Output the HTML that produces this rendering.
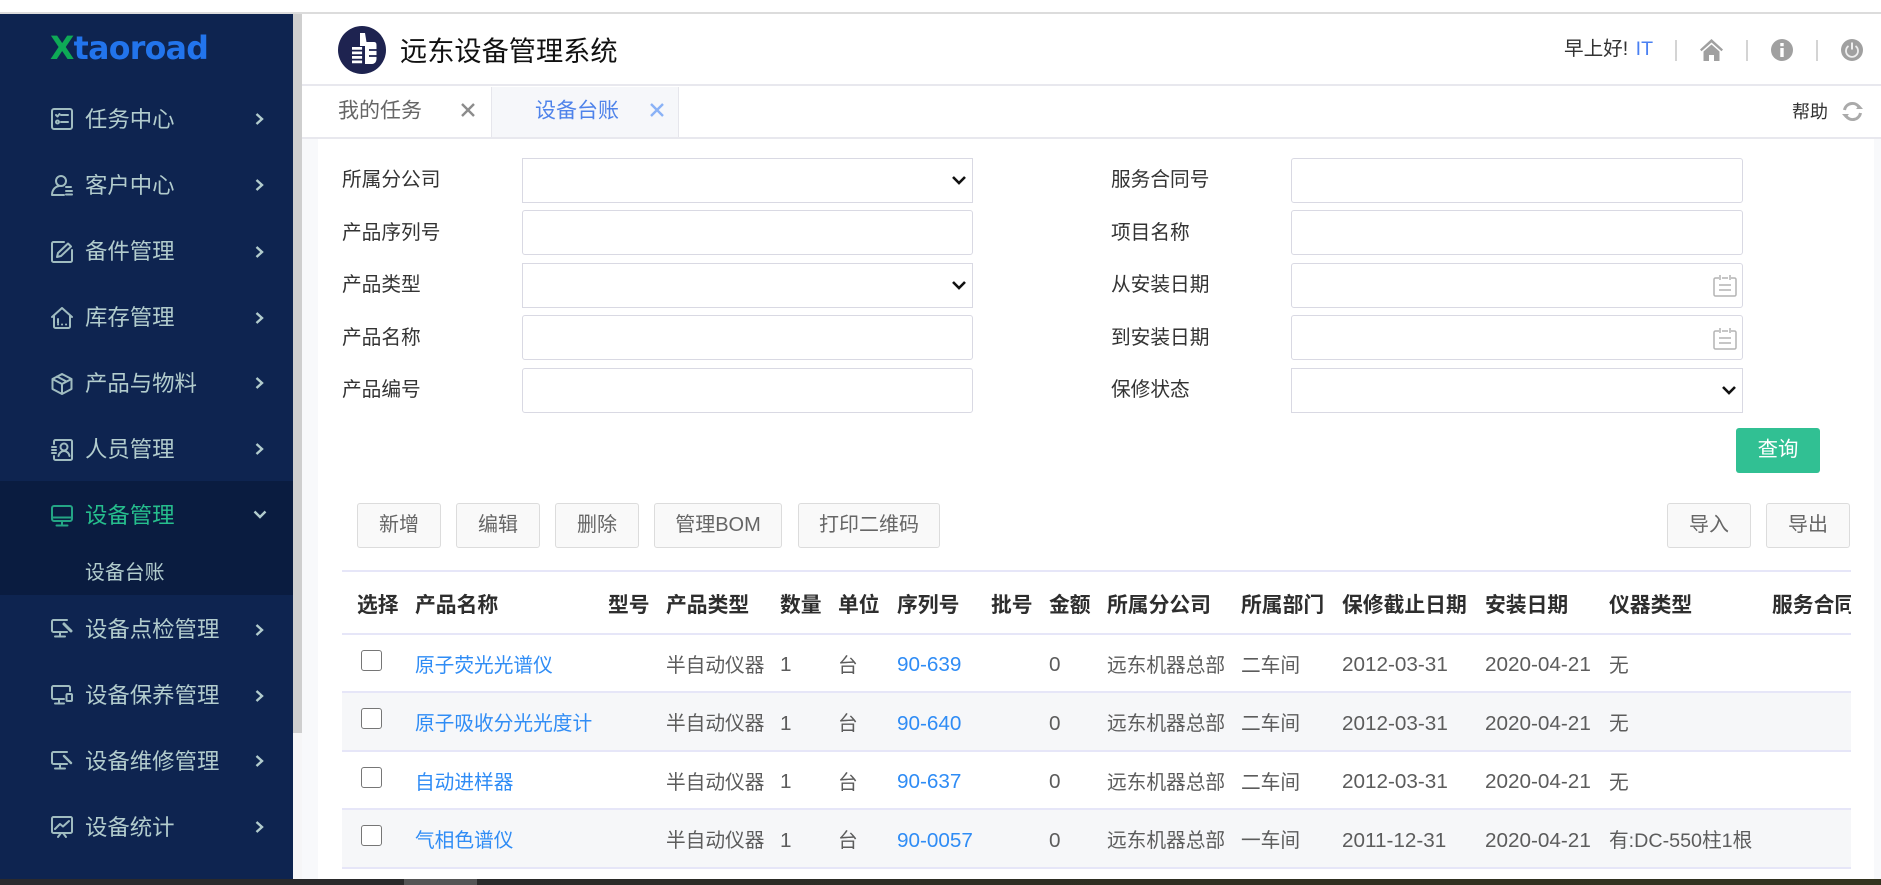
<!DOCTYPE html>
<html lang="zh-CN"><head><meta charset="utf-8"><title>远东设备管理系统</title>
<style>
html,body{margin:0;padding:0;width:1881px;height:885px;overflow:hidden;background:#fff;font-family:"Liberation Sans","Noto Sans CJK SC",sans-serif}
.a{position:absolute}
.t{position:absolute;white-space:nowrap;line-height:1;transform:translateY(-50%)}
.side{font-size:22.4px;color:#b2cccd;left:85px}
.ic{position:absolute;left:51px;width:22px;height:22px;fill:none;stroke:#a0bcc0;stroke-width:2;stroke-linecap:round;stroke-linejoin:round}
.ch{position:absolute;left:255px;width:9px;height:12px;fill:none;stroke:#b2cccd;stroke-width:2.4}
.lb{font-size:19.7px;color:#333;margin-top:2px}
.in{position:absolute;height:45px;box-sizing:border-box;border:1.5px solid #d9d9e3;border-radius:3px;background:#fff}
.l{left:522px;width:451px}.r{left:1291px;width:452px}
.sel{border-radius:0}
.ar{position:absolute;width:16px;height:10px;fill:none;stroke:#111;stroke-width:2.6}
.b{position:absolute;top:503px;height:45px;box-sizing:border-box;border:1.5px solid #dcdcdc;border-radius:3px;background:#f9f9f9;color:#666;font-size:20px;line-height:42px;text-align:center}
.wrap{position:absolute;left:342px;top:570px;width:1509px;height:300px;overflow:hidden}
table{border-collapse:separate;border-spacing:0;table-layout:fixed;width:1709px}
th,td{padding:0;text-align:left;font-size:19.7px;white-space:nowrap;overflow:visible;border-bottom:2px solid #e6e6f8;box-sizing:border-box}
th{height:65px;border-top:2px solid #e6e6f8;color:#2e2e2e;font-weight:700;font-size:20.8px}
td{color:#5c5c5c}
tr.o td{background:#f6f7f9}
td a{color:#2f8cf5;text-decoration:none}
.n{font-size:20.7px;position:relative;top:2px}
.cb{display:block;width:21px;height:21px;box-sizing:border-box;border:1.5px solid #767676;border-radius:3px;background:#fff;margin:-6px 0 0 19px}
</style></head><body>

<div class="a" style="left:0;top:12px;width:1881px;height:2px;background:#dcdcdc"></div>
<div class="a" style="left:302px;top:137px;width:16px;height:742px;background:#f8f9fb"></div>
<div class="a" style="left:1874px;top:138px;width:7px;height:741px;background:#f8f9fb"></div>

<!-- sidebar -->
<div class="a" style="left:0;top:14px;width:293px;height:865px;background:#0e2450"></div>
<div class="a" style="left:0;top:481px;width:293px;height:114px;background:#0a1c40"></div>
<div class="a" style="left:293px;top:14px;width:9px;height:719px;background:#cfcfcf"></div>
<div class="a" style="left:293px;top:733px;width:9px;height:146px;background:#f6f6f7"></div>

<div class="t" style="left:50px;top:50px;font-family:'DejaVu Sans',sans-serif;font-weight:700;font-size:31.6px;letter-spacing:-.7px;color:#2274ec"><span style="color:#0ea956">X</span>taoroad</div>

<svg class="ic" style="top:108px" viewBox="0 0 22 22"><rect x="1" y="1" width="20" height="20" rx="2"/><path d="M10 7h7M10 14h7M5 7l1.500 1.500L8.500 6"/><circle cx="6.500" cy="14" r="1.500"/></svg>
<div class="t side" style="top:120px">任务中心</div>
<svg class="ch" style="top:113px" viewBox="0 0 9 12"><path d="M1.500 1l5.500 5-5.500 5"/></svg>

<svg class="ic" style="top:174px" viewBox="0 0 22 22"><circle cx="10" cy="7" r="5"/><path d="M8 12C3 13 1 17 1 21h12M15 13h5M15 17h6M15 20.500h6"/></svg>
<div class="t side" style="top:186px">客户中心</div>
<svg class="ch" style="top:179px" viewBox="0 0 9 12"><path d="M1.500 1l5.500 5-5.500 5"/></svg>

<svg class="ic" style="top:241px" viewBox="0 0 22 22"><path d="M13 1H2.500A1.500 1.500 0 0 0 1 2.500v17A1.500 1.500 0 0 0 2.500 21h17a1.500 1.500 0 0 0 1.500-1.500V9"/><path d="M6 16l1-4L17 2.500l3 3L10 15z"/></svg>
<div class="t side" style="top:252px">备件管理</div>
<svg class="ch" style="top:246px" viewBox="0 0 9 12"><path d="M1.500 1l5.500 5-5.500 5"/></svg>

<svg class="ic" style="top:307px" viewBox="0 0 22 22"><path d="M1 10L11 1l10 9M3 9v10.500A1.500 1.500 0 0 0 4.500 21h13a1.500 1.500 0 0 0 1.500-1.500V9"/><path d="M7 12v4M7 17.500h.1M11 17.500h.1M15 17.500h.1"/></svg>
<div class="t side" style="top:318px">库存管理</div>
<svg class="ch" style="top:312px" viewBox="0 0 9 12"><path d="M1.500 1l5.500 5-5.500 5"/></svg>

<svg class="ic" style="top:373px" viewBox="0 0 22 22"><path d="M11 1l9.500 5v10L11 21l-9.500-5V6zM1.500 6L11 11l9.500-5M11 11v10M6 3.500l9.500 5"/></svg>
<div class="t side" style="top:384px">产品与物料</div>
<svg class="ch" style="top:377px" viewBox="0 0 9 12"><path d="M1.500 1l5.500 5-5.500 5"/></svg>

<svg class="ic" style="top:439px" viewBox="0 0 22 22"><path d="M3 5V2.500A1.500 1.500 0 0 1 4.500 1h15A1.500 1.500 0 0 1 21 2.500v17a1.500 1.500 0 0 1-1.500 1.500h-15A1.500 1.500 0 0 1 3 19.500V17"/><circle cx="13" cy="8" r="3.500"/><path d="M7.500 17c.5-3 3-5 5.500-5s5 2 5.500 5M1 8h4M1 11h4M1 14h4"/></svg>
<div class="t side" style="top:450px">人员管理</div>
<svg class="ch" style="top:443px" viewBox="0 0 9 12"><path d="M1.500 1l5.500 5-5.500 5"/></svg>

<svg class="ic" style="top:505px;stroke:#24a585" viewBox="0 0 22 22"><rect x="1" y="1" width="20" height="15" rx="2"/><path d="M1 12.500h20M11 16v4M5.500 20.500h11" stroke-width="2"/></svg>
<div class="t side" style="top:516px;color:#26be8d">设备管理</div>
<svg class="a" style="left:253px;top:510px;width:14px;height:9px;fill:none;stroke:#b2cccd;stroke-width:2.4" viewBox="0 0 14 9"><path d="M1.500 1.500L7 7l5.500-5.500"/></svg>

<div class="t" style="left:85px;top:574px;font-size:19.9px;color:#b2cccd">设备台账</div>

<svg class="ic" style="top:618px;height:20px" viewBox="0 0 22 20"><path d="M16 2H2.500A1.500 1.500 0 0 0 1 3.500v9A1.500 1.500 0 0 0 2.500 14H16M9 14v4M4 18.500h10"/><path d="M13 6l7 7" stroke-width="3"/></svg>
<div class="t side" style="top:630px">设备点检管理</div>
<svg class="ch" style="top:624px" viewBox="0 0 9 12"><path d="M1.500 1l5.500 5-5.500 5"/></svg>

<svg class="ic" style="top:684px" viewBox="0 0 22 22"><path d="M19 7V3.500A1.500 1.500 0 0 0 17.500 2h-15A1.500 1.500 0 0 0 1 3.500v10A1.500 1.500 0 0 0 2.500 15H13M8 15v4M4 19.500h9"/><rect x="15.500" y="10" width="5.500" height="7" rx="1" stroke-width="2"/></svg>
<div class="t side" style="top:696px">设备保养管理</div>
<svg class="ch" style="top:690px" viewBox="0 0 9 12"><path d="M1.500 1l5.500 5-5.500 5"/></svg>

<svg class="ic" style="top:750px;height:20px" viewBox="0 0 22 20"><path d="M16 2H2.500A1.500 1.500 0 0 0 1 3.500v9A1.500 1.500 0 0 0 2.500 14H16M9 14v4M4 18.500h10"/><path d="M13 6l7 7" stroke-width="2.400"/></svg>
<div class="t side" style="top:762px">设备维修管理</div>
<svg class="ch" style="top:755px" viewBox="0 0 9 12"><path d="M1.500 1l5.500 5-5.500 5"/></svg>

<svg class="ic" style="top:816px" viewBox="0 0 22 22"><rect x="1" y="1" width="20" height="16" rx="1.500"/><path d="M4 13l5-5 3 2.500L18 5M7 21l3-4M15 21l-3-4"/></svg>
<div class="t side" style="top:828px">设备统计</div>
<svg class="ch" style="top:821px" viewBox="0 0 9 12"><path d="M1.500 1l5.500 5-5.500 5"/></svg>

<!-- header -->
<div class="a" style="left:302px;top:84px;width:1579px;height:1.500px;background:#e8e8ee"></div>
<svg class="a" style="left:338px;top:26px;width:48px;height:48px" viewBox="0 0 48 48"><circle cx="24" cy="24" r="24" fill="#1e2350"/><path d="M22 20V7h5l1.500 9H36c2.500 0 2.500 2 2.500 3.500v13c0 3.500-2 5.500-4.500 5.500h-7V20z" fill="#fff"/><path d="M14 21h11v2.700H14zM14 25.500h11v2.700H14zM14 30h11v2.700H14zM14 34.500h11v2.700H14z" fill="#fff"/><path d="M25 21v17M31 24h8M31 30h8" stroke="#1e2350" stroke-width="1.800"/></svg>
<div class="t" style="left:400px;top:51px;font-size:27.2px;color:#111">远东设备管理系统</div>

<div class="t" style="left:1564px;top:50px;font-size:19.6px;color:#333">早上好! <span style="color:#4a80f2;margin-left:2px">IT</span></div>
<div class="a" style="left:1675px;top:40px;width:2px;height:21px;background:#d4d4d4"></div>
<div class="a" style="left:1746px;top:40px;width:1.500px;height:21px;background:#d4d4d4"></div>
<div class="a" style="left:1816px;top:40px;width:2px;height:21px;background:#d4d4d4"></div>
<svg class="a" style="left:1700px;top:39px;width:23px;height:22px" viewBox="0 0 23 22"><path d="M11.500 0L23 10.500l-1.500 1.800L11.500 3.500 1.500 12.300 0 10.500z" fill="#a0a0a0"/><path d="M3.500 12.500L11.500 5.500l8 7V22h-5.500v-6H9v6H3.500z" fill="#a0a0a0"/></svg>
<svg class="a" style="left:1771px;top:39px;width:22px;height:22px" viewBox="0 0 22 22"><circle cx="11" cy="11" r="11" fill="#a0a0a0"/><rect x="9.300" y="9" width="3.400" height="9" fill="#fff"/><rect x="9.300" y="4" width="3.400" height="3.200" fill="#fff"/></svg>
<svg class="a" style="left:1841px;top:39px;width:22px;height:22px" viewBox="0 0 22 22"><circle cx="11" cy="11" r="11" fill="#a0a0a0"/><path d="M7.500 7a6 6 0 1 0 7 0" fill="none" stroke="#eee" stroke-width="1.800"/><path d="M11 3.500v7" stroke="#eee" stroke-width="2"/></svg>

<!-- tabs -->
<div class="a" style="left:491px;top:87px;width:188px;height:50px;background:#f6f7fa;border-left:1.500px solid #e6e6ec;border-right:1.500px solid #e6e6ec;box-sizing:border-box"></div>
<div class="a" style="left:302px;top:137px;width:1579px;height:1.500px;background:#e8e8ee"></div>
<div class="t" style="left:338px;top:111px;font-size:21px;color:#666">我的任务</div>
<svg class="a" style="left:461px;top:103px;width:14px;height:14px" viewBox="0 0 14 14"><path d="M1 1l12 12M13 1L1 13" stroke="#8c8c8c" stroke-width="2.400"/></svg>
<div class="t" style="left:535px;top:111px;font-size:21px;color:#4f83ea">设备台账</div>
<svg class="a" style="left:650px;top:103px;width:14px;height:14px" viewBox="0 0 14 14"><path d="M1 1l12 12M13 1L1 13" stroke="#8ab2f6" stroke-width="2.400"/></svg>
<div class="t" style="left:1792px;top:112px;font-size:18px;color:#333">帮助</div>
<svg class="a" style="left:1841px;top:101px;width:23px;height:21px" viewBox="0 0 23 21"><path d="M3.500 9A8 8 0 0 1 18 6M19.500 12A8 8 0 0 1 5 15" fill="none" stroke="#aaa" stroke-width="3"/><path d="M15 8h7l-3.500-4zM8 13H1l3.500 4z" fill="#aaa"/></svg>

<!-- form -->
<div class="t lb" style="left:342px;top:179px">所属分公司</div>
<div class="in l sel" style="top:158px"></div>
<svg class="ar" style="left:951px;top:175px" viewBox="0 0 16 10"><path d="M2 2l6 6 6-6"/></svg>
<div class="t lb" style="left:342px;top:232px">产品序列号</div>
<div class="in l" style="top:210px"></div>
<div class="t lb" style="left:342px;top:284px">产品类型</div>
<div class="in l sel" style="top:263px"></div>
<svg class="ar" style="left:951px;top:280px" viewBox="0 0 16 10"><path d="M2 2l6 6 6-6"/></svg>
<div class="t lb" style="left:342px;top:337px">产品名称</div>
<div class="in l" style="top:315px"></div>
<div class="t lb" style="left:342px;top:389px">产品编号</div>
<div class="in l" style="top:368px"></div>

<div class="t lb" style="left:1111px;top:179px">服务合同号</div>
<div class="in r" style="top:158px"></div>
<div class="t lb" style="left:1111px;top:232px">项目名称</div>
<div class="in r" style="top:210px"></div>
<div class="t lb" style="left:1111px;top:284px">从安装日期</div>
<div class="in r" style="top:263px"></div>
<svg class="a" style="left:1713px;top:274px;width:24px;height:23px" viewBox="0 0 24 23"><path d="M6 4H2.500A1.500 1.500 0 0 0 1 5.500v15A1.500 1.500 0 0 0 2.500 22h19a1.500 1.500 0 0 0 1.500-1.500v-15A1.500 1.500 0 0 0 21.500 4H18M9 4h6M7 1v5M17 1v5M6 11h12M6 16h12" fill="none" stroke="#b4b4b4" stroke-width="1.500"/></svg>
<div class="t lb" style="left:1111px;top:337px">到安装日期</div>
<div class="in r" style="top:315px"></div>
<svg class="a" style="left:1713px;top:327px;width:24px;height:23px" viewBox="0 0 24 23"><path d="M6 4H2.500A1.500 1.500 0 0 0 1 5.500v15A1.500 1.500 0 0 0 2.500 22h19a1.500 1.500 0 0 0 1.500-1.500v-15A1.500 1.500 0 0 0 21.500 4H18M9 4h6M7 1v5M17 1v5M6 11h12M6 16h12" fill="none" stroke="#b4b4b4" stroke-width="1.500"/></svg>
<div class="t lb" style="left:1111px;top:389px">保修状态</div>
<div class="in r sel" style="top:368px"></div>
<svg class="ar" style="left:1721px;top:385px" viewBox="0 0 16 10"><path d="M2 2l6 6 6-6"/></svg>

<div class="a" style="left:1736px;top:428px;width:84px;height:45px;background:#31c093;border-radius:3px;color:#fff;font-size:20.4px;line-height:45px;text-align:center">查询</div>

<div class="b" style="left:357px;width:84px">新增</div>
<div class="b" style="left:456px;width:84px">编辑</div>
<div class="b" style="left:555px;width:84px">删除</div>
<div class="b" style="left:654px;width:128px">管理BOM</div>
<div class="b" style="left:798px;width:142px">打印二维码</div>
<div class="b" style="left:1667px;width:84px">导入</div>
<div class="b" style="left:1766px;width:84px">导出</div>

<!-- table -->
<div class="wrap"><table>
<colgroup><col style="width:73px"><col style="width:193px"><col style="width:58px"><col style="width:114px"><col style="width:58px"><col style="width:59px"><col style="width:94px"><col style="width:58px"><col style="width:58px"><col style="width:134px"><col style="width:101px"><col style="width:143px"><col style="width:124px"><col style="width:163px"><col style="width:289px"></colgroup>
<tr><th style="padding-left:15px">选择</th><th>产品名称</th><th>型号</th><th>产品类型</th><th>数量</th><th>单位</th><th>序列号</th><th>批号</th><th>金额</th><th>所属分公司</th><th>所属部门</th><th>保修截止日期</th><th>安装日期</th><th>仪器类型</th><th>服务合同号</th></tr>
<tr style="height:58px"><td><span class="cb"></span></td><td><a>原子荧光光谱仪</a></td><td></td><td>半自动仪器</td><td><span class="n">1</span></td><td>台</td><td><a class="n">90-639</a></td><td></td><td><span class="n">0</span></td><td>远东机器总部</td><td>二车间</td><td><span class="n">2012-03-31</span></td><td><span class="n">2020-04-21</span></td><td>无</td><td></td></tr>
<tr class="o" style="height:59px"><td><span class="cb"></span></td><td><a>原子吸收分光光度计</a></td><td></td><td>半自动仪器</td><td><span class="n">1</span></td><td>台</td><td><a class="n">90-640</a></td><td></td><td><span class="n">0</span></td><td>远东机器总部</td><td>二车间</td><td><span class="n">2012-03-31</span></td><td><span class="n">2020-04-21</span></td><td>无</td><td></td></tr>
<tr style="height:58px"><td><span class="cb"></span></td><td><a>自动进样器</a></td><td></td><td>半自动仪器</td><td><span class="n">1</span></td><td>台</td><td><a class="n">90-637</a></td><td></td><td><span class="n">0</span></td><td>远东机器总部</td><td>二车间</td><td><span class="n">2012-03-31</span></td><td><span class="n">2020-04-21</span></td><td>无</td><td></td></tr>
<tr class="o" style="height:59px"><td><span class="cb"></span></td><td><a>气相色谱仪</a></td><td></td><td>半自动仪器</td><td><span class="n">1</span></td><td>台</td><td><a class="n">90-0057</a></td><td></td><td><span class="n">0</span></td><td>远东机器总部</td><td>一车间</td><td><span class="n">2011-12-31</span></td><td><span class="n">2020-04-21</span></td><td>有:DC-550柱1根</td><td></td></tr>
</table></div>

<!-- taskbar -->
<div class="a" style="left:0;top:879px;width:1881px;height:6px;background:linear-gradient(90deg,#2a2a2e 0,#2a2a2a 25%,#2f2f22 60%,#33331f 100%)"></div>
<div class="a" style="left:404px;top:879px;width:73px;height:6px;background:#555"></div>
</body></html>
